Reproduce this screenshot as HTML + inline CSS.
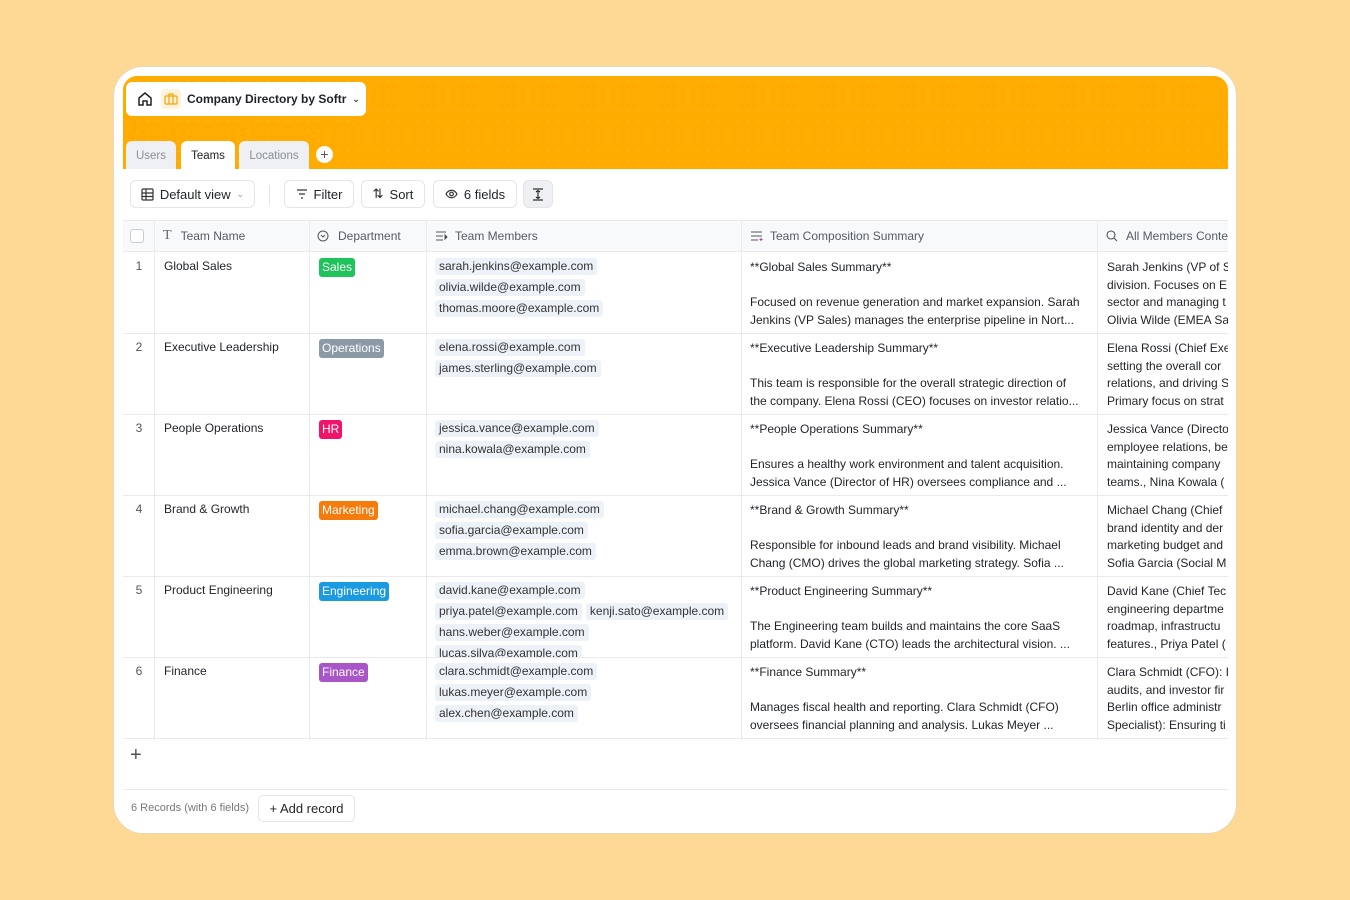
<!DOCTYPE html>
<html><head><meta charset="utf-8"><style>
*{box-sizing:border-box;margin:0;padding:0}
body{width:1350px;height:900px;background:#fdd995;font-family:"Liberation Sans",sans-serif;color:#1f2328;position:relative;overflow:hidden}
.card{position:absolute;left:113px;top:66px;width:1124px;height:768px;background:#fff;border-radius:30px;border:1px solid #e8d9b5}
.inner{position:absolute;left:123px;top:76px;width:1105px;height:749px;overflow:hidden;border-radius:14px 14px 0 0;background:#fff}
.hdr{position:absolute;left:0;top:0;width:1105px;height:93px;background:#ffab00;background-image:radial-gradient(rgba(255,255,255,.14) 0.8px,transparent 1px);background-size:10px 10px}
.crumb{position:absolute;left:3px;top:6px;width:240px;height:34px;background:#fff;border-radius:6px;font-size:12px;font-weight:bold;display:flex;align-items:center}
.tab{position:absolute;top:65px;height:28px;border-radius:6px 6px 0 0;font-size:11.5px;display:flex;align-items:center;justify-content:center;background:#eef0f3;color:#8a8f98;padding-top:2px}
.btn{position:absolute;top:104px;height:28px;border:1px solid #e3e5e8;border-radius:6px;font-size:13px;display:flex;align-items:center;justify-content:center;gap:6px;background:#fff}
.th{position:absolute;top:144px;height:32px;border-top:1px solid #e8eaed;border-bottom:1px solid #e8eaed;background:#f8f9fb;font-size:12px;color:#555b63;display:flex;align-items:center}
.col{position:absolute;top:144px;height:520px;border-left:1px solid #e8eaed}
.row{position:absolute;left:0;width:1105px;border-bottom:1px solid #e8eaed;height:82px;overflow:hidden}
.c{position:absolute;top:0;height:81px;overflow:hidden;font-size:12px;line-height:17.5px}
.num{left:0;width:32px;text-align:center;padding-top:6px;color:#555}
.nm{left:41px;padding-top:6px}
.dep{left:196px;top:6px}
.badge{display:inline-block;color:#fff;font-size:12px;padding:1px 3px;border-radius:3px;line-height:17px}
.mem{left:312px;width:300px;top:6px}
.chip{display:inline-block;background:#edf2f8;border-radius:3px;padding:0 4px;margin:0 4px 4px 0;font-size:12px;line-height:17px;color:#333}
.sum{left:627px;width:334px;padding-top:7px}
.all{left:984px;width:125px;padding-top:7px;white-space:nowrap}
</style></head><body>
<div class="card"></div>
<div class="inner">
<div class="hdr">
 <div class="crumb">
  <svg style="margin-left:11px" width="16" height="16" viewBox="0 0 16 16" fill="none" stroke="#222" stroke-width="1.5"><path d="M2 7L8 2l6 5v7h-4v-4H6v4H2z"/></svg>
  <span style="margin-left:8px;width:20px;height:20px;background:#fff3dc;border-radius:4px;display:inline-flex;align-items:center;justify-content:center"><svg width="14" height="12" viewBox="0 0 14 12" fill="none" stroke="#f5a300" stroke-width="1.2"><rect x="1" y="3" width="12" height="8" rx="1"/><path d="M5 3V1h4v2M5 3v8M9 3v8"/></svg></span>
  <span style="margin-left:6px">Company Directory by Softr</span>
  <span style="margin-left:6px;font-size:9px;color:#555">&#8964;</span>
 </div>
 <div class="tab" style="left:3px;width:50px">Users</div>
 <div class="tab" style="left:58px;width:54px;background:#fff;color:#222">Teams</div>
 <div class="tab" style="left:116px;width:70px">Locations</div>
 <div style="position:absolute;left:193px;top:70px;width:17px;height:17px;border-radius:50%;background:#fff;font-size:14px;line-height:16px;text-align:center;color:#555">+</div>
</div>
<div class="btn" style="left:7px;width:125px"><svg width="13" height="13" viewBox="0 0 13 13" fill="none" stroke="#333" stroke-width="1.2"><rect x="1" y="1" width="11" height="11" rx="1"/><path d="M1 5h11M1 8.5h11M5 1v11"/></svg>Default view <span style="color:#999;font-size:9px">&#8964;</span></div>
<div style="position:absolute;left:146px;top:109px;width:1px;height:20px;background:#e3e5e8"></div>
<div class="btn" style="left:161px;width:70px"><svg width="12" height="10" viewBox="0 0 12 10" stroke="#333" stroke-width="1.2"><path d="M1 1h10M3 5h6M5 9h2"/></svg>Filter</div>
<div class="btn" style="left:238px;width:64px"><span style="font-size:13px">⇅</span>Sort</div>
<div class="btn" style="left:310px;width:84px"><svg width="13" height="10" viewBox="0 0 13 10" fill="none" stroke="#333" stroke-width="1.2"><path d="M1 5c3-5 8-5 11 0c-3 5-8 5-11 0z"/><circle cx="6.5" cy="5" r="1.8"/></svg>6 fields</div>
<div class="btn" style="left:400px;width:30px;background:#eef0f3"><svg width="12" height="13" viewBox="0 0 12 13" stroke="#333" stroke-width="1.2"><path d="M1 1h10M1 12h10M6 3v7M4 4l2-1.5 2 1.5M4 9l2 1.5 2-1.5"/></svg></div>

<div class="th" style="left:0;width:1105px"></div>
<div style="position:absolute;left:7px;top:153px;width:14px;height:14px;border:1px solid #c9ccd1;border-radius:3px;background:#fff"></div>
<div class="th" style="left:40px;border:0;background:none;top:145px;height:30px"><span style="font-family:'Liberation Serif',serif;font-size:14px;color:#666;margin-right:9px">T</span>Team Name</div>
<div class="th" style="left:194px;border:0;background:none;top:145px;height:30px"><svg width="12" height="12" viewBox="0 0 12 12" fill="none" stroke="#555" stroke-width="1"><circle cx="6" cy="6" r="5"/><path d="M4 5l2 2 2-2"/></svg><span style="margin-left:9px">Department</span></div>
<div class="th" style="left:312px;border:0;background:none;top:145px;height:30px"><svg width="13" height="10" viewBox="0 0 13 10" stroke="#555" stroke-width="1"><path d="M1 1h10M1 5h7M1 9h7M10 4l2 2-2 2z"/></svg><span style="margin-left:7px">Team Members</span></div>
<div class="th" style="left:627px;border:0;background:none;top:145px;height:30px"><svg width="14" height="10" viewBox="0 0 14 10" stroke="#555" stroke-width="1"><path d="M1 1h11M1 5h11M1 9h7"/><path d="M11 7v3M9.5 8.5h3" stroke="#a03ad0"/></svg><span style="margin-left:6px">Team Composition Summary</span></div>
<div class="th" style="left:983px;border:0;background:none;top:145px;height:30px;white-space:nowrap"><svg width="12" height="12" viewBox="0 0 12 12" fill="none" stroke="#555" stroke-width="1.1"><circle cx="5" cy="5" r="4"/><path d="M8 8l3 3"/></svg><span style="margin-left:8px">All Members Conte</span></div>

<div class="col" style="left:31px"></div><div class="col" style="left:186px"></div><div class="col" style="left:303px"></div><div class="col" style="left:618px"></div><div class="col" style="left:974px"></div>

<div style="position:absolute;top:176px;left:0;width:1105px">
<div class="row" style="top:0"><div class="c num">1</div><div class="c nm">Global Sales</div><div class="c dep"><span class="badge" style="background:#1ec35a">Sales</span></div><div class="c mem"><span class="chip">sarah.jenkins@example.com</span><br><span class="chip">olivia.wilde@example.com</span><br><span class="chip">thomas.moore@example.com</span></div><div class="c sum">**Global Sales Summary**<br><br>Focused on revenue generation and market expansion. Sarah Jenkins (VP Sales) manages the enterprise pipeline in Nort...</div><div class="c all">Sarah Jenkins (VP of S<br>division. Focuses on E<br>sector and managing t<br>Olivia Wilde (EMEA Sa</div></div>
<div class="row" style="top:81px"><div class="c num">2</div><div class="c nm">Executive Leadership</div><div class="c dep"><span class="badge" style="background:#8b9aa6">Operations</span></div><div class="c mem"><span class="chip">elena.rossi@example.com</span><br><span class="chip">james.sterling@example.com</span></div><div class="c sum">**Executive Leadership Summary**<br><br>This team is responsible for the overall strategic direction of<br>the company. Elena Rossi (CEO) focuses on investor relatio...</div><div class="c all">Elena Rossi (Chief Exe<br>setting the overall cor<br>relations, and driving S<br>Primary focus on strat</div></div>
<div class="row" style="top:162px"><div class="c num">3</div><div class="c nm">People Operations</div><div class="c dep"><span class="badge" style="background:#f0156b">HR</span></div><div class="c mem"><span class="chip">jessica.vance@example.com</span><br><span class="chip">nina.kowala@example.com</span></div><div class="c sum">**People Operations Summary**<br><br>Ensures a healthy work environment and talent acquisition. Jessica Vance (Director of HR) oversees compliance and ...</div><div class="c all">Jessica Vance (Directo<br>employee relations, be<br>maintaining company<br>teams., Nina Kowala (</div></div>
<div class="row" style="top:243px"><div class="c num">4</div><div class="c nm">Brand &amp; Growth</div><div class="c dep"><span class="badge" style="background:#f57c0c">Marketing</span></div><div class="c mem"><span class="chip">michael.chang@example.com</span><br><span class="chip">sofia.garcia@example.com</span><br><span class="chip">emma.brown@example.com</span></div><div class="c sum">**Brand &amp; Growth Summary**<br><br>Responsible for inbound leads and brand visibility. Michael Chang (CMO) drives the global marketing strategy. Sofia ...</div><div class="c all">Michael Chang (Chief<br>brand identity and der<br>marketing budget and<br>Sofia Garcia (Social M</div></div>
<div class="row" style="top:324px"><div class="c num">5</div><div class="c nm">Product Engineering</div><div class="c dep"><span class="badge" style="background:#1a9ae0">Engineering</span></div><div class="c mem" style="width:310px"><span class="chip">david.kane@example.com</span><br><span class="chip">priya.patel@example.com</span><span class="chip">kenji.sato@example.com</span><br><span class="chip">hans.weber@example.com</span><br><span class="chip">lucas.silva@example.com</span></div><div class="c sum">**Product Engineering Summary**<br><br>The Engineering team builds and maintains the core SaaS platform. David Kane (CTO) leads the architectural vision. ...</div><div class="c all">David Kane (Chief Tec<br>engineering departme<br>roadmap, infrastructu<br>features., Priya Patel (</div></div>
<div class="row" style="top:405px"><div class="c num">6</div><div class="c nm">Finance</div><div class="c dep"><span class="badge" style="background:#a855c7">Finance</span></div><div class="c mem"><span class="chip">clara.schmidt@example.com</span><br><span class="chip">lukas.meyer@example.com</span><br><span class="chip">alex.chen@example.com</span></div><div class="c sum">**Finance Summary**<br><br>Manages fiscal health and reporting. Clara Schmidt (CFO) oversees financial planning and analysis. Lukas Meyer ...</div><div class="c all">Clara Schmidt (CFO): I<br>audits, and investor fir<br>Berlin office administr<br>Specialist): Ensuring ti</div></div>
</div>
<div style="position:absolute;left:0;top:664px;width:1105px;height:49px;background:#fff"></div>
<div style="position:absolute;left:7px;top:668px;font-size:20px;color:#555;font-weight:lighter">+</div>
<div style="position:absolute;left:0;top:713px;width:1105px;border-top:1px solid #e8eaed"></div>
<div style="position:absolute;left:8px;top:726px;font-size:11px;color:#777">6 Records (with 6 fields)</div>
<div style="position:absolute;left:135px;top:719px;width:97px;height:27px;border:1px solid #e3e5e8;border-radius:5px;font-size:13px;display:flex;align-items:center;justify-content:center">+ Add record</div>
</div>
</body></html>
